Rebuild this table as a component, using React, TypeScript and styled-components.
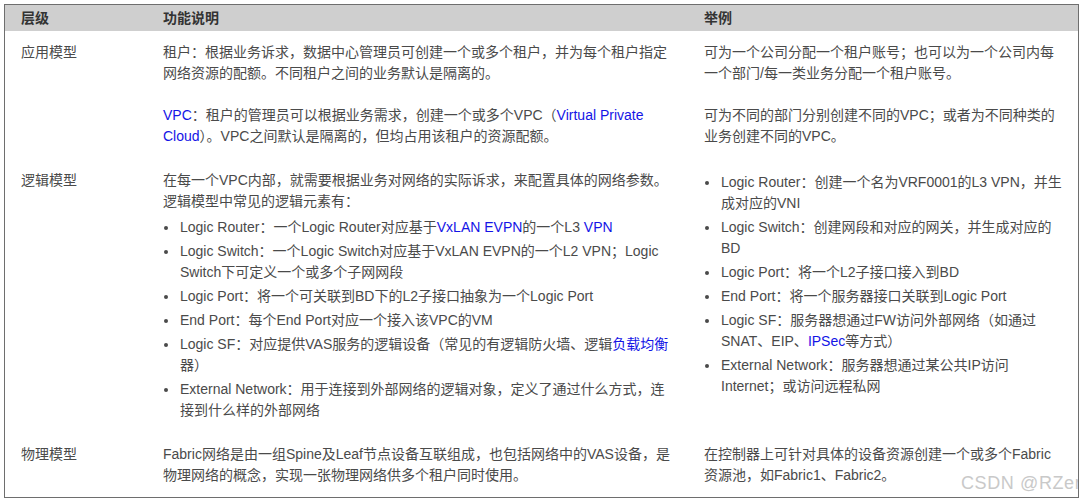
import { ReactNode } from "react";
import styled, { createGlobalStyle } from "styled-components";

const GlobalStyle = createGlobalStyle`
    body {
        margin: 0;
        background: #ffffff;
        font-family: "Liberation Sans", "Noto Sans CJK SC", sans-serif;
    }
`;

const Frame = styled.div`
    position: relative;

    box-sizing: border-box;
    width: 1075px;
    height: 494px;
    margin: 4px 0 0 4px;

    border: 1px solid #6e6e6e;
    overflow: hidden;
`;

const Table = styled.table`
    width: 100%;
    table-layout: fixed;
    border-collapse: collapse;

    font-size: 14px;
    line-height: 21px;
    color: #4a4a4a;
`;

const HeadCell = styled.th`
    padding: 3px 16px 2px;

    background: #cfcfcf;
    color: #333333;
    font-weight: bold;
    text-align: left;
`;

const Cell = styled.td`
    padding: 11px 16px 12px;

    vertical-align: top;
    text-align: left;
`;

const Para = styled.p`
    margin: 0;

    & + & {
        margin-top: 21px;
    }
`;

const List = styled.ul<{ $first: boolean }>`
    margin: ${(props) => (props.$first ? "2px" : "5px")} 0 0;
    padding: 0;

    list-style: none;
`;

const Item = styled.li`
    position: relative;

    padding-left: 17px;

    & + & {
        margin-top: 3px;
    }

    &::before {
        content: "";
        position: absolute;

        top: 9px;
        left: 1px;

        width: 4px;
        height: 4px;

        border-radius: 50%;
        background: #4a4a4a;
    }
`;

const Link = styled.span`
    color: #1414e6;
`;

const Watermark = styled.div`
    position: absolute;

    left: 956px;
    bottom: 3px;

    font-family: "Liberation Sans", sans-serif;
    font-size: 18px;
    letter-spacing: 0.6px;
    color: #c9c9c9;
    white-space: nowrap;
`;

type Block = { kind: "p"; content: ReactNode } | { kind: "ul"; items: ReactNode[] };

type Row = {
    level: string;
    desc: Block[];
    example: Block[];
};

const ROWS: Row[] = [
    {
        level: "应用模型",
        desc: [
            {
                kind: "p",
                content:
                    "租户：根据业务诉求，数据中心管理员可创建一个或多个租户，并为每个租户指定网络资源的配额。不同租户之间的业务默认是隔离的。",
            },
            {
                kind: "p",
                content: (
                    <>
                        <Link>VPC</Link>：租户的管理员可以根据业务需求，创建一个或多个VPC（
                        <Link>Virtual Private Cloud</Link>）。VPC之间默认是隔离的，但均占用该租户的资源配额。
                    </>
                ),
            },
        ],
        example: [
            {
                kind: "p",
                content: "可为一个公司分配一个租户账号；也可以为一个公司内每一个部门/每一类业务分配一个租户账号。",
            },
            {
                kind: "p",
                content: "可为不同的部门分别创建不同的VPC；或者为不同种类的业务创建不同的VPC。",
            },
        ],
    },
    {
        level: "逻辑模型",
        desc: [
            {
                kind: "p",
                content: "在每一个VPC内部，就需要根据业务对网络的实际诉求，来配置具体的网络参数。逻辑模型中常见的逻辑元素有：",
            },
            {
                kind: "ul",
                items: [
                    <>
                        Logic Router：一个Logic Router对应基于<Link>VxLAN EVPN</Link>的一个L3 <Link>VPN</Link>
                    </>,
                    "Logic Switch：一个Logic Switch对应基于VxLAN EVPN的一个L2 VPN；Logic Switch下可定义一个或多个子网网段",
                    "Logic Port：将一个可关联到BD下的L2子接口抽象为一个Logic Port",
                    "End Port：每个End Port对应一个接入该VPC的VM",
                    <>
                        Logic SF：对应提供VAS服务的逻辑设备（常见的有逻辑防火墙、逻辑<Link>负载均衡</Link>器）
                    </>,
                    "External Network：用于连接到外部网络的逻辑对象，定义了通过什么方式，连接到什么样的外部网络",
                ],
            },
        ],
        example: [
            {
                kind: "ul",
                items: [
                    "Logic Router：创建一个名为VRF0001的L3 VPN，并生成对应的VNI",
                    "Logic Switch：创建网段和对应的网关，并生成对应的BD",
                    "Logic Port：将一个L2子接口接入到BD",
                    "End Port：将一个服务器接口关联到Logic Port",
                    <>
                        Logic SF：服务器想通过FW访问外部网络（如通过SNAT、EIP、<Link>IPSec</Link>等方式）
                    </>,
                    "External Network：服务器想通过某公共IP访问Internet；或访问远程私网",
                ],
            },
        ],
    },
    {
        level: "物理模型",
        desc: [
            {
                kind: "p",
                content:
                    "Fabric网络是由一组Spine及Leaf节点设备互联组成，也包括网络中的VAS设备，是物理网络的概念，实现一张物理网络供多个租户同时使用。",
            },
        ],
        example: [
            {
                kind: "p",
                content: "在控制器上可针对具体的设备资源创建一个或多个Fabric资源池，如Fabric1、Fabric2。",
            },
        ],
    },
];

const renderBlocks = (blocks: Block[]) =>
    blocks.map((block, i) =>
        block.kind === "p" ? (
            <Para key={i}>{block.content}</Para>
        ) : (
            <List key={i} $first={i === 0}>
                {block.items.map((item, j) => (
                    <Item key={j}>{item}</Item>
                ))}
            </List>
        )
    );

const App = () => {
    return (
        <>
            <GlobalStyle />
            <Frame>
                <Table>
                    <colgroup>
                        <col style={{ width: 142 }} />
                        <col style={{ width: 541 }} />
                        <col />
                    </colgroup>
                    <thead>
                        <tr>
                            <HeadCell>层级</HeadCell>
                            <HeadCell>功能说明</HeadCell>
                            <HeadCell>举例</HeadCell>
                        </tr>
                    </thead>
                    <tbody>
                        {ROWS.map((row) => (
                            <tr key={row.level}>
                                <Cell>{row.level}</Cell>
                                <Cell>{renderBlocks(row.desc)}</Cell>
                                <Cell>{renderBlocks(row.example)}</Cell>
                            </tr>
                        ))}
                    </tbody>
                </Table>
                <Watermark>CSDN @RZer</Watermark>
            </Frame>
        </>
    );
};

export default App;
